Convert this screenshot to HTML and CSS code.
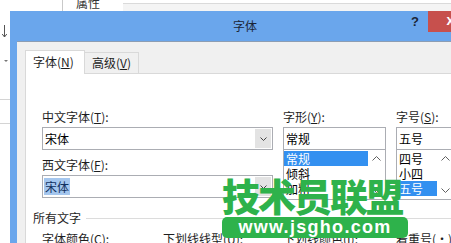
FILE: index.html
```html
<!DOCTYPE html>
<html lang="zh-CN">

<head>
    <meta charset="UTF-8">
    <meta name="viewport" content="width=device-width, initial-scale=1.0">
    <title>字体</title>
    <link rel="stylesheet" href="styles.css">
</head>

<body>
    <div class="desktop">
        <!-- window behind the dialog -->
        <div class="topbar">
            <div class="pane-left"></div>
            <div class="pane-title">属性</div>
            <div class="pane-rest"></div>
        </div>
        <div class="side">
            <svg width="10" height="232" viewBox="0 0 10 232">
                <path d="M4.5 14 V26 M2.2 23 L4.5 26 L6.8 23" fill="none" stroke="#555" stroke-width="1"/>
                <path d="M4 49 H8 L6 51 Z" fill="#777"/>
                <path d="M0 88.5 H10 M0 112.5 H10" stroke="#d4d4d4" stroke-width="1"/>
            </svg>
        </div>

        <!-- font dialog -->
        <div class="dialog">
            <div class="titlebar">
                <span></span>
                <span class="title">字体</span>
                <div class="caption-btns">
                    <span class="help">?</span>
                    <span class="close">x</span>
                </div>
            </div>
            <div class="client">
                <div class="tabs">
                    <div class="tab active">字体(<u>N</u>)</div>
                    <div class="tab">高级(<u>V</u>)</div>
                </div>
                <div class="panel">
                    <div class="font-row">
                        <div class="col col-cn">
                            <div class="label">中文字体(<u>T</u>):</div>
                            <div class="combo">
                                <span class="value">宋体</span>
                                <span class="drop"><svg width="7" height="4" viewBox="0 0 7 4"><path d="M0.5 0.5 L3.5 3.5 L6.5 0.5" fill="none" stroke="#444"/></svg></span>
                            </div>
                            <div class="label second">西文字体(<u>F</u>):</div>
                            <div class="combo">
                                <span class="value selected">宋体</span>
                                <span class="drop"><svg width="7" height="4" viewBox="0 0 7 4"><path d="M0.5 0.5 L3.5 3.5 L6.5 0.5" fill="none" stroke="#444"/></svg></span>
                            </div>
                        </div>
                        <div class="col col-style">
                            <div class="label">字形(<u>Y</u>):</div>
                            <div class="textbox">常规</div>
                            <div class="listbox">
                                <ul>
                                    <li class="sel">常规</li>
                                    <li>倾斜</li>
                                    <li>加粗</li>
                                </ul>
                                <div class="scroll">
                                    <svg width="9" height="5" viewBox="0 0 9 5"><path d="M0.5 4.5 L4.5 0.5 L8.5 4.5" fill="none" stroke="#606060"/></svg>
                                    <svg width="9" height="5" viewBox="0 0 9 5"><path d="M0.5 0.5 L4.5 4.5 L8.5 0.5" fill="none" stroke="#606060"/></svg>
                                </div>
                            </div>
                        </div>
                        <div class="col col-size">
                            <div class="label">字号(<u>S</u>):</div>
                            <div class="textbox">五号</div>
                            <div class="listbox">
                                <ul>
                                    <li>四号</li>
                                    <li>小四</li>
                                    <li class="sel">五号</li>
                                </ul>
                                <div class="scroll">
                                    <svg width="9" height="5" viewBox="0 0 9 5"><path d="M0.5 4.5 L4.5 0.5 L8.5 4.5" fill="none" stroke="#606060"/></svg>
                                    <svg width="9" height="5" viewBox="0 0 9 5"><path d="M0.5 0.5 L4.5 4.5 L8.5 0.5" fill="none" stroke="#606060"/></svg>
                                </div>
                            </div>
                        </div>
                    </div>

                    <div class="group"><span>所有文字</span><i></i></div>
                    <div class="effects-row">
                        <div class="label">字体颜色(<u>C</u>):</div>
                        <div class="label">下划线线型(<u>U</u>):</div>
                        <div class="label">下划线颜色(<u>I</u>):</div>
                        <div class="label">着重号(·):</div>
                    </div>
                </div>
            </div>
        </div>

        <!-- site watermark over the screenshot -->
        <div class="watermark">
            <div class="wm-big">技术员联盟</div>
            <div class="wm-url">www.jsgho.com</div>
        </div>
    </div>
</body>

</html>
```

FILE: styles.css
```css
* {
    box-sizing: border-box;
}

html,
body {
    margin: 0;
    padding: 0;
    overflow: hidden;
}

body {
    background-color: #fff;
    font-family: "Noto Sans CJK SC", sans-serif;
    font-size: 12px;
    color: #1e1e1e;
}

.desktop {
    position: relative;
    width: 451px;
    height: 243px;
    overflow: hidden;
    display: grid;
    grid-template-columns: 10px 1fr;
    grid-template-rows: 11px 1fr;
}

/* window behind */
.topbar {
    grid-column: 1 / 3;
    display: flex;
}
.pane-left {
    width: 63px;
    border-right: 1px solid #c9c9c9;
}
.pane-title {
    width: 60px;
    padding-left: 13px;
    margin-top: -4px;
    line-height: 14px;
    color: #333;
}
.pane-rest {
    flex: 1;
    background: linear-gradient(#fff 0 3px, #dadada 3px 4px, #f4f4f4 4px);
}
.side svg {
    display: block;
}

/* dialog frame */
.dialog {
    width: 470px;
    padding: 0 7px;
    background-color: #6aa6ec;
    display: flex;
    flex-direction: column;
}
.titlebar {
    height: 30px;
    display: grid;
    grid-template-columns: 1fr auto 1fr;
}
.title {
    line-height: 30px;
    color: #1b2536;
}
.caption-btns {
    justify-self: end;
    display: flex;
    align-items: flex-start;
}
.help {
    width: 26px;
    height: 21px;
    line-height: 21px;
    text-align: center;
    font-family: "Liberation Sans", sans-serif;
    font-size: 13px;
    font-weight: bold;
    color: #1b2536;
}
.close {
    width: 45px;
    height: 21px;
    line-height: 19px;
    text-align: center;
    background-color: #c7504d;
    color: #fff;
    font-family: "Liberation Sans", sans-serif;
    font-size: 14px;
    font-weight: bold;
}

.client {
    flex: 1;
    background-color: #f0f0f0;
    border-top: 1px solid #8c9db3;
    padding: 8px 0 0 8px;
    display: flex;
    flex-direction: column;
}

/* tabs */
.tabs {
    height: 23px;
    display: flex;
    align-items: flex-end;
}
.tab {
    width: 54px;
    height: 21px;
    padding-left: 7px;
    line-height: 20px;
    background-color: #f0f0f0;
    border: 1px solid #d9d9d9;
    border-left: none;
    border-bottom: none;
}
.tab.active {
    position: relative;
    z-index: 1;
    width: 60px;
    height: 24px;
    margin-bottom: -1px;
    line-height: 22px;
    background-color: #fff;
    border-left: 1px solid #d9d9d9;
}
.tab u,
.label u {
    text-underline-offset: 1px;
}

.panel {
    flex: 1;
    background-color: #fff;
    border: 1px solid #d9d9d9;
    padding: 35px 0 0 16px;
}

/* font pickers */
.font-row {
    display: flex;
    gap: 10px;
}
.col {
    display: flex;
    flex-direction: column;
}
.col-cn {
    width: 231px;
}
.col-style {
    width: 103px;
}
.col-size {
    width: 59px;
}
.label {
    height: 16px;
    line-height: 16px;
    margin-bottom: 2px;
    white-space: nowrap;
}
.label.second {
    margin-top: 7px;
}

.combo {
    height: 23px;
    border: 1px solid #abadb3;
    display: flex;
    align-items: center;
    padding-left: 1px;
}
.combo .value {
    padding: 0 1px;
    line-height: 17px;
    color: #000;
}
.combo .value.selected {
    background-color: #a4c6ee;
    color: #10305e;
}
.combo .drop {
    margin-left: auto;
    margin-right: 1px;
    width: 16px;
    height: 19px;
    background-color: #e3e3e3;
    display: flex;
    align-items: center;
    justify-content: center;
}
.drop svg {
    display: block;
}

.textbox {
    height: 23px;
    border: 1px solid #abadb3;
    padding-left: 2px;
    line-height: 21px;
    color: #000;
}
.listbox {
    height: 51px;
    margin-top: -1px;
    border: 1px solid #abadb3;
    display: flex;
}
.listbox ul {
    flex: 1;
    margin: 0;
    padding: 1px 0 0 0;
    list-style: none;
}
.listbox li {
    height: 15px;
    line-height: 15px;
    padding-left: 2px;
    color: #000;
}
.listbox li.sel {
    background-color: #3390f0;
    color: #fff;
}
.scroll {
    width: 17px;
    padding: 6px 0 6px;
    display: flex;
    flex-direction: column;
    justify-content: space-between;
    align-items: center;
}
.scroll svg {
    display: block;
}

/* all text group */
.group {
    margin-top: 10px;
    margin-left: -9px;
    display: flex;
    align-items: center;
}
.group span {
    line-height: 16px;
}
.group i {
    flex: 1;
    height: 1px;
    margin-left: 5px;
    background-color: #dcdcdc;
}
.effects-row {
    margin-top: 5px;
    display: grid;
    grid-template-columns: 121px 120px 113px auto;
}

/* watermark */
.watermark {
    position: absolute;
    left: 222px;
    top: 175px;
    width: 186px;
}
.wm-big {
    font-size: 38px;
    font-weight: 900;
    line-height: 40px;
    letter-spacing: -2px;
    color: #2eb24b;
    white-space: nowrap;
}
.wm-url {
    margin-top: 2px;
    height: 21px;
    border-radius: 5px;
    background-color: #2eb24b;
    color: #fff;
    font-family: "Liberation Sans", sans-serif;
    font-size: 18px;
    font-weight: bold;
    line-height: 21px;
    letter-spacing: 1.3px;
    text-align: center;
}
```
